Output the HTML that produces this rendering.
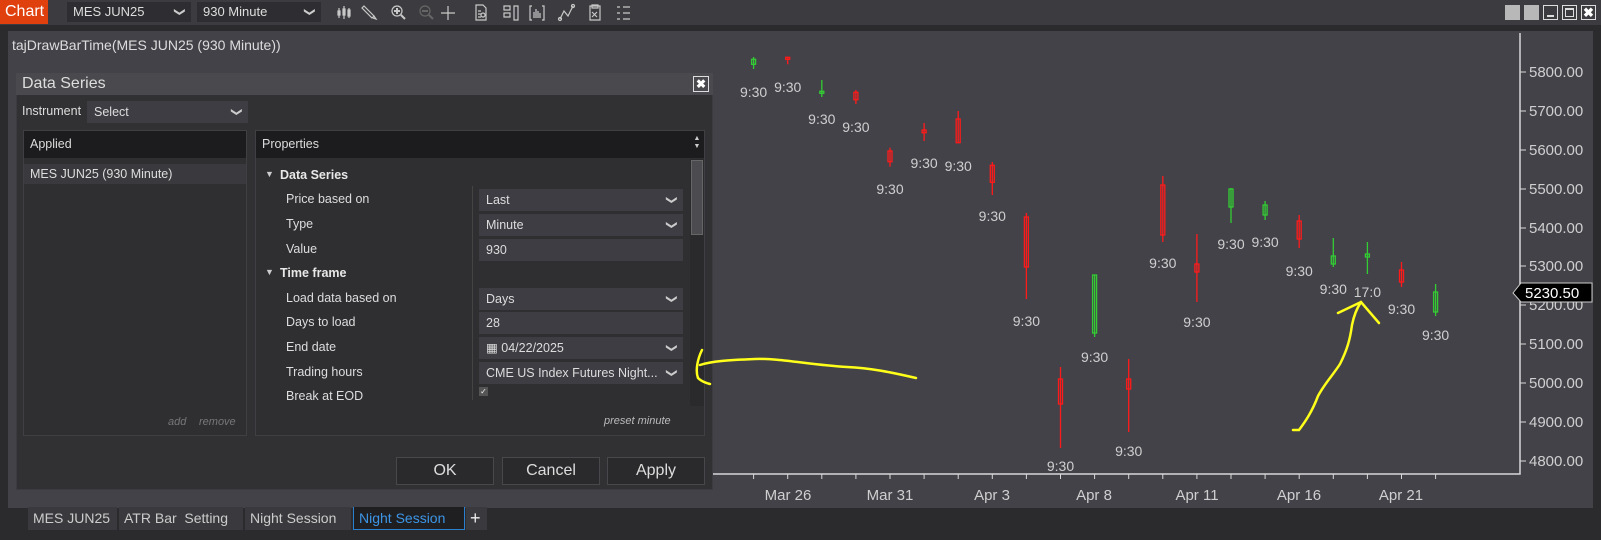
<!DOCTYPE html>
<html><head><meta charset="utf-8"><style>
*{box-sizing:border-box;margin:0;padding:0}
body{width:1601px;height:540px;background:#2b2b2e;font-family:"Liberation Sans",sans-serif;position:relative;overflow:hidden;color:#ddd}
.a{position:absolute}
.tb{left:0;top:0;width:1601px;height:25px;background:#3c3c40}
.dd{background:#2e2e32;color:#ddd;font-size:13px;line-height:20px;padding-left:6px;height:20px;top:2px}
.dd i,.chev{position:absolute;right:7px;top:0;font-style:normal;font-size:11px;color:#ccc;display:inline-block;transform:rotate(90deg)}
.panel{left:8px;top:31px;width:1585px;height:477px;background:#434249}
.lbl{font-size:12.5px;color:#ddd}
.box{background:#3d3d43;height:22px;font-size:12.5px;line-height:22px;padding-left:7px;color:#ddd;left:479px;width:204px}
.btn{background:#2a2a2c;border:1px solid #48484c;color:#ddd;font-size:16px;text-align:center;line-height:26px;height:28px;top:457px;width:98px}
.tab{top:507px;height:23px;background:#3a3a3e;font-size:14px;line-height:23px;color:#ccc;padding-left:5px}
</style></head><body>
<div class="a tb"></div>
<div class="a" style="left:0;top:0;width:48px;height:24px;background:#e0400e;color:#fff;font-size:16px;line-height:24px;padding-left:5px">Chart</div>
<div class="a dd" style="left:67px;width:124px">MES JUN25<i>&#10095;</i></div>
<div class="a dd" style="left:197px;width:124px">930 Minute<i>&#10095;</i></div>
<svg class="a" style="left:330px;top:0" width="310" height="25" fill="none" stroke="#c8c8c8" stroke-width="1.2">
<path d="M9 8v10M8 11h2v4h-2zM14 6v13M13 9h2v6h-2zM19 8v10M18 10h2v6h-2z"/>
<path d="M34 6l10 10l-2 2l-10-10zM44 16l2 3l-3-1"/>
<circle cx="67" cy="11" r="5"/><path d="M64 11h6M67 8v6M71 15l4 4" stroke-width="2"/>
<circle cx="95" cy="11" r="5" stroke="#666"/><path d="M92 11h6M99 15l4 4" stroke="#666" stroke-width="2"/>
<path d="M118 6v14M111 13h14"/>
<path d="M146 5h7l3 3v12h-10zM148 11h3M148 14h3M148 17h3"/><circle cx="153" cy="15" r="2"/>
<path d="M174 6h6v4h-6zM174 13h6v4h-6zM184 6h4v14h-4z"/>
<path d="M202 6h-2v14h2M212 6h2v14h-2M204 12v6M206 9v9M208 11v7M210 13v5"/>
<path d="M230 19l4-8l4 5l5-10"/><circle cx="230" cy="19" r="1.5"/><circle cx="243" cy="6" r="1.5"/>
<path d="M260 6h10v14h-10zM262 5h6v3h-6zM262 12l5 5M267 12l-5 5"/>
<path d="M287 7h3M287 13h3M287 19h3M293 7h7M293 13h7M293 19h7"/>
</svg>
<div class="a" style="left:1505px;top:5px;width:15px;height:15px;background:#b8b8b8"></div>
<div class="a" style="left:1524px;top:5px;width:15px;height:15px;background:#b8b8b8"></div>
<div class="a" style="left:1543px;top:5px;width:15px;height:15px;border:1px solid #ddd"><div class="a" style="left:3px;top:9px;width:7px;height:2px;background:#ddd"></div></div>
<div class="a" style="left:1562px;top:5px;width:15px;height:15px;border:1px solid #ddd"><div class="a" style="left:2px;top:2px;width:9px;height:9px;border:1px solid #ddd;border-top-width:2px"></div></div>
<div class="a" style="left:1581px;top:5px;width:15px;height:15px;border:1px solid #ddd;color:#fff;font-size:13px;font-weight:bold;line-height:13px;text-align:center">&#10006;</div>

<div class="a panel"></div>
<div class="a" style="left:12px;top:37px;font-size:14px;color:#ddd">tajDrawBarTime(MES JUN25 (930 Minute))</div>

<svg class="a" style="left:0;top:0" width="1601" height="540" font-family="Liberation Sans, sans-serif">
<g stroke="#d8d8d8" stroke-width="1.5" fill="none"><path d="M1520 33V474H700"/></g>
<g stroke="#d8d8d8" stroke-width="1">
<path d="M1520 72h6M1520 111h6M1520 150h6M1520 189h6M1520 228h6M1520 266h6M1520 305h6M1520 344h6M1520 383h6M1520 422h6M1520 461h6"/>
<path d="M753.6 474v5M787.7 474v5M821.8 474v5M855.9 474v5M890 474v5M924.1 474v5M958.2 474v5M992.3 474v5M1026.4 474v5M1060.5 474v5M1094.6 474v5M1128.7 474v5M1162.8 474v5M1196.9 474v5M1231 474v5M1265.1 474v5M1299.2 474v5M1333.3 474v5M1367.4 474v5M1401.5 474v5M1435.6 474v5"/>
</g>
<g fill="#cfcfcf" font-size="15">
<text x="1529" y="77">5800.00</text><text x="1529" y="116">5700.00</text><text x="1529" y="155">5600.00</text><text x="1529" y="194">5500.00</text><text x="1529" y="233">5400.00</text><text x="1529" y="271">5300.00</text><text x="1529" y="310">5200.00</text><text x="1529" y="349">5100.00</text><text x="1529" y="388">5000.00</text><text x="1529" y="427">4900.00</text><text x="1529" y="466">4800.00</text>
</g>
<g fill="#cfcfcf" font-size="15" text-anchor="middle">
<text x="788" y="500">Mar 26</text><text x="890" y="500">Mar 31</text><text x="992" y="500">Apr 3</text><text x="1094" y="500">Apr 8</text><text x="1197" y="500">Apr 11</text><text x="1299" y="500">Apr 16</text><text x="1401" y="500">Apr 21</text>
</g>
<path d="M1513 293l8-10h71v19h-71z" fill="#000" stroke="#ccc"/>
<text x="1525" y="298" fill="#fff" font-size="15">5230.50</text>
<g fill="none" stroke-width="1.3">
<g stroke="#33cc33">
<path d="M753.6 57v12"/><rect x="751.6" y="59.3" width="4" height="5"/>
<path d="M821.8 80v17"/><rect x="819.8" y="91.3" width="4" height="2"/>
<path d="M1094.6 275v62"/><rect x="1092.6" y="275" width="4" height="58"/>
<path d="M1231 188v35"/><rect x="1229" y="189" width="4" height="18"/>
<path d="M1265.1 201v19"/><rect x="1263.1" y="205" width="4" height="10"/>
<path d="M1333.3 238v29"/><rect x="1331.3" y="256" width="4" height="8"/>
<path d="M1367.4 242v32"/><rect x="1365.4" y="254" width="4" height="3"/>
<path d="M1435.6 284v32"/><rect x="1433.6" y="292" width="4" height="20"/>
</g>
<g stroke="#ff1a1a">
<path d="M787.7 56.7v7.6"/><rect x="785.7" y="57.3" width="4" height="2"/>
<path d="M855.9 90v14"/><rect x="853.9" y="92.3" width="4" height="7.4"/>
<path d="M890 147.7v19"/><rect x="888" y="151" width="4" height="10.7"/>
<path d="M924.1 123v18"/><rect x="922.1" y="130" width="4" height="2.7"/>
<path d="M958.2 111v32"/><rect x="956.2" y="119" width="4" height="23.7"/>
<path d="M992.3 162v33"/><rect x="990.3" y="165.3" width="4" height="17"/>
<path d="M1026.4 213v86"/><rect x="1024.4" y="217" width="4" height="50"/>
<path d="M1060.5 367v81"/><rect x="1058.5" y="379" width="4" height="25"/>
<path d="M1128.7 359v73"/><rect x="1126.7" y="379" width="4" height="10"/>
<path d="M1162.8 176v66"/><rect x="1160.8" y="185" width="4" height="50"/>
<path d="M1196.9 234v68"/><rect x="1194.9" y="264" width="4" height="8"/>
<path d="M1299.2 215v33"/><rect x="1297.2" y="221" width="4" height="18"/>
<path d="M1401.5 262v25"/><rect x="1399.5" y="270" width="4" height="12"/>
</g></g>
<g fill="#cfcfcf" font-size="14" text-anchor="middle">
<text x="753.6" y="97">9:30</text><text x="787.7" y="92">9:30</text><text x="821.8" y="124">9:30</text><text x="855.9" y="132">9:30</text><text x="890" y="194">9:30</text><text x="924.1" y="168">9:30</text><text x="958.2" y="171">9:30</text><text x="992.3" y="221">9:30</text><text x="1026.4" y="326">9:30</text><text x="1060.5" y="471">9:30</text><text x="1094.6" y="362">9:30</text><text x="1128.7" y="456">9:30</text><text x="1162.8" y="268">9:30</text><text x="1196.9" y="327">9:30</text><text x="1231" y="249">9:30</text><text x="1265.1" y="247">9:30</text><text x="1299.2" y="276">9:30</text><text x="1333.3" y="294">9:30</text><text x="1367.4" y="297">17:0</text><text x="1401.5" y="314">9:30</text><text x="1435.6" y="340">9:30</text>
</g>
</svg>

<div class="a" style="left:16px;top:73px;width:697px;height:417px;background:#313134;border:1px solid #3c3c40"></div>
<div class="a" style="left:16px;top:73px;width:697px;height:22px;background:#4a4a4e;font-size:16px;line-height:22px;padding-left:6px;color:#ddd">Data Series</div>
<div class="a" style="left:693px;top:76px;width:16px;height:16px;border:1px solid #ddd;color:#fff;font-size:12px;font-weight:bold;line-height:14px;text-align:center">&#10006;</div>
<div class="a lbl" style="left:22px;top:104px">Instrument</div>
<div class="a box" style="left:87px;width:161px;top:101px;background:#3d3d43">Select<span class="chev">&#10095;</span></div>
<div class="a" style="left:23px;top:130px;width:224px;height:306px;border:1px solid #404044;background:#2f2f32"></div>
<div class="a" style="left:24px;top:131px;width:222px;height:27px;background:#1c1c1e;font-size:12.5px;line-height:26px;padding-left:6px">Applied</div>
<div class="a" style="left:24px;top:164px;width:222px;height:20px;background:#3a3a3e;font-size:12.5px;line-height:20px;padding-left:6px">MES JUN25 (930 Minute)</div>
<div class="a" style="left:168px;top:416px;font-size:11px;font-style:italic;color:#777">add</div>
<div class="a" style="left:199px;top:416px;font-size:11px;font-style:italic;color:#777">remove</div>

<div class="a" style="left:255px;top:130px;width:450px;height:306px;border:1px solid #404044;background:#2f2f32"></div>
<div class="a" style="left:256px;top:131px;width:434px;height:27px;background:#1c1c1e;font-size:12.5px;line-height:26px;padding-left:6px">Properties</div>
<div class="a" style="left:690px;top:131px;width:14px;height:27px;background:#1c1c1e;color:#ccc;font-size:7px;line-height:8px;text-align:center;padding-top:4px">&#9650;<br>&#9660;</div>
<div class="a" style="left:690px;top:159px;width:14px;height:247px;background:#2a2a2c"></div>
<div class="a" style="left:691px;top:160px;width:12px;height:75px;background:#4c4c50;border:1px solid #666"></div>
<div class="a" style="left:472px;top:186px;width:1px;height:214px;background:#444"></div>
<div class="a" style="left:256px;top:159px;width:433px;height:247px;overflow:hidden">
 <div class="a" style="left:9px;top:10px;font-size:9px;color:#ccc">&#9660;</div>
 <div class="a lbl" style="left:24px;top:9px;font-weight:bold;color:#e8e8e8">Data Series</div>
 <div class="a lbl" style="left:30px;top:33px">Price based on</div>
 <div class="a lbl" style="left:30px;top:58px">Type</div>
 <div class="a lbl" style="left:30px;top:83px">Value</div>
 <div class="a" style="left:9px;top:108px;font-size:9px;color:#ccc">&#9660;</div>
 <div class="a lbl" style="left:24px;top:107px;font-weight:bold;color:#e8e8e8">Time frame</div>
 <div class="a lbl" style="left:30px;top:132px">Load data based on</div>
 <div class="a lbl" style="left:30px;top:156px">Days to load</div>
 <div class="a lbl" style="left:30px;top:181px">End date</div>
 <div class="a lbl" style="left:30px;top:206px">Trading hours</div>
 <div class="a lbl" style="left:30px;top:230px">Break at EOD</div>
 <div class="a box" style="left:223px;top:30px">Last<span class="chev">&#10095;</span></div>
 <div class="a box" style="left:223px;top:55px">Minute<span class="chev">&#10095;</span></div>
 <div class="a box" style="left:223px;top:80px">930</div>
 <div class="a box" style="left:223px;top:129px">Days<span class="chev">&#10095;</span></div>
 <div class="a box" style="left:223px;top:153px">28</div>
 <div class="a box" style="left:223px;top:178px">&#9638; 04/22/2025<span class="chev">&#10095;</span></div>
 <div class="a box" style="left:223px;top:203px">CME US Index Futures Night...<span class="chev">&#10095;</span></div>
 <div class="a" style="left:223px;top:228px;width:9px;height:9px;background:#555;color:#eee;font-size:8px;line-height:9px;text-align:center">&#10003;</div>
</div>
<div class="a" style="left:604px;top:415px;font-size:11px;font-style:italic;color:#bbb">preset minute</div>
<div class="a btn" style="left:396px">OK</div>
<div class="a btn" style="left:502px">Cancel</div>
<div class="a btn" style="left:607px">Apply</div>

<div class="a tab" style="left:28px;width:89px">MES JUN25</div>
<div class="a tab" style="left:119px;width:124px">ATR Bar&nbsp; Setting</div>
<div class="a tab" style="left:245px;width:106px">Night Session</div>
<div class="a tab" style="left:353px;width:112px;background:#1f1f21;border:1px solid #2a7fd0;border-top:none;color:#3c95e6">Night Session</div>
<div class="a tab" style="left:466px;width:21px;color:#eee;font-size:18px;padding-left:4px">+</div>

<svg class="a" style="left:0;top:0" width="1601" height="540" fill="none" stroke="#ffff1a" stroke-width="2.5" stroke-linecap="round">
<path d="M916 378C890 372 870 368 847 367C810 365 780 358 755 359C730 360 712 361 700 365"/>
<path d="M702 350C698 358 695 370 698 378C701 381 706 383 710 384"/>
<path d="M1293 430L1299 430C1305 422 1312 412 1318 396C1325 383 1333 375 1340 364C1347 350 1350 340 1352 325C1354 315 1357 308 1361 302"/>
<path d="M1338 313L1361 302L1379 323"/>
</svg>
</body></html>
